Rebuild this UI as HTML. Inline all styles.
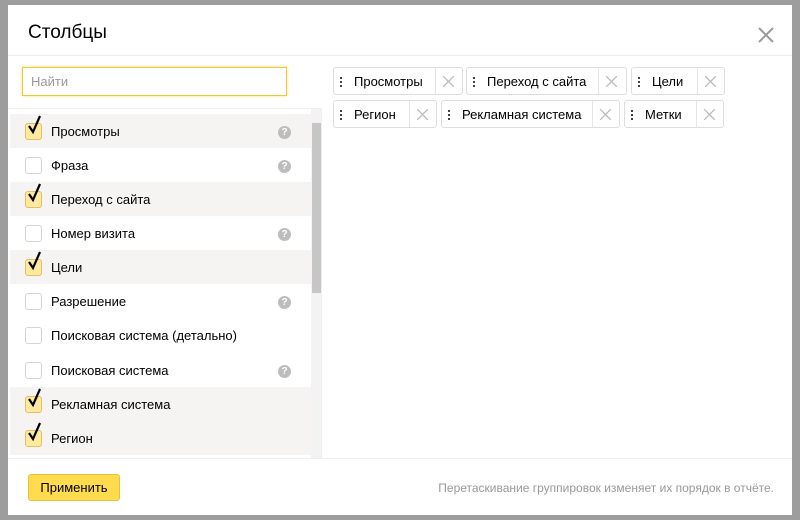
<!DOCTYPE html>
<html><head><meta charset="utf-8"><style>
*{box-sizing:border-box;margin:0;padding:0}
body{width:800px;height:520px;background:#9d9d9d;font-family:"Liberation Sans",Arial,sans-serif;position:relative;overflow:hidden;color:#000}
.m{position:absolute;left:8px;top:5px;width:784px;height:510px;background:#fff}
.t{position:absolute;left:20px;top:17px;font-size:19px}
.x{position:absolute;left:750px;top:22px}
.hl{position:absolute;left:0;top:50px;width:784px;height:1px;background:#eee}
.srch{position:absolute;left:14px;top:62px;width:265px;height:29px;border:1px solid #f0c63a;box-shadow:0 0 3px #ffe07a;padding:6px 8px;font-size:13px;color:#999}
.lp{position:absolute;left:0;top:103px;width:314px;height:350px;border-top:1px solid #eee;border-right:1px solid #eee;overflow:hidden}
.row{position:absolute;left:2px;width:301px;height:34px}
.row.c{background:#f5f4f2}
.cb{position:absolute;left:15px;top:9px;width:17px;height:17px;border:1px solid #d4d4d4;border-radius:3px;background:#fff}
.c .cb{background:#fde9a0;border-color:#e0c060}
.ck{position:absolute;left:15px;top:-3px}
.lb{position:absolute;left:41px;top:10px;font-size:13px}
.q{position:absolute;left:268px;top:12px;width:13px;height:13px;border-radius:50%;background:#bdbdbd;color:#fff;font-size:10px;font-weight:bold;text-align:center;line-height:13px}
.sb{position:absolute;left:303px;top:0;width:11px;height:350px;background:#f3f3f3}
.th{position:absolute;left:304px;top:14px;width:9px;height:170px;background:#c6c6c6}
.tag{position:absolute;height:28px;border:1px solid #ddd;border-radius:3px;font-size:13px}
.tag .d{position:absolute;left:6px;top:8px;width:2px;height:11px;background:radial-gradient(circle,#333 1px,transparent 1.2px) 0 0/2px 4px}
.tag .n{position:absolute;left:20px;top:6px}
.tag .sep{position:absolute;top:0;bottom:0;width:1px;background:#e5e5e5}
.tag svg{position:absolute;top:8px}
.fl{position:absolute;left:0;top:453px;width:784px;height:1px;background:#eee}
.btn{position:absolute;left:20px;top:469px;width:92px;height:27px;background:#ffdb4d;border:1px solid #e5c23a;border-radius:3px;font-size:13px;text-align:center;line-height:25px}
.note{position:absolute;right:18px;top:476px;font-size:12px;color:#999}
</style></head><body>
<div class="m">
<div class="t">Столбцы</div>
<svg class="x" width="16" height="16"><path d="M1 1L15 15M15 1L1 15" stroke="#999" stroke-width="2"/></svg>
<div class="hl"></div>
<div class="srch">Найти</div>
<div class="lp">
<div class="row c" style="top:5px"><div class="cb"></div><svg class="ck" width="20" height="24"><path d="M4 15L8 21L15 5" stroke="#000" stroke-width="2.2" fill="none"/></svg><div class="lb">Просмотры</div><div class="q">?</div></div>
<div class="row" style="top:39px"><div class="cb"></div><div class="lb">Фраза</div><div class="q">?</div></div>
<div class="row c" style="top:73px"><div class="cb"></div><svg class="ck" width="20" height="24"><path d="M4 15L8 21L15 5" stroke="#000" stroke-width="2.2" fill="none"/></svg><div class="lb">Переход с сайта</div></div>
<div class="row" style="top:107px"><div class="cb"></div><div class="lb">Номер визита</div><div class="q">?</div></div>
<div class="row c" style="top:141px"><div class="cb"></div><svg class="ck" width="20" height="24"><path d="M4 15L8 21L15 5" stroke="#000" stroke-width="2.2" fill="none"/></svg><div class="lb">Цели</div></div>
<div class="row" style="top:175px"><div class="cb"></div><div class="lb">Разрешение</div><div class="q">?</div></div>
<div class="row" style="top:209px"><div class="cb"></div><div class="lb">Поисковая система (детально)</div></div>
<div class="row" style="top:244px"><div class="cb"></div><div class="lb">Поисковая система</div><div class="q">?</div></div>
<div class="row c" style="top:278px"><div class="cb"></div><svg class="ck" width="20" height="24"><path d="M4 15L8 21L15 5" stroke="#000" stroke-width="2.2" fill="none"/></svg><div class="lb">Рекламная система</div></div>
<div class="row c" style="top:312px"><div class="cb"></div><svg class="ck" width="20" height="24"><path d="M4 15L8 21L15 5" stroke="#000" stroke-width="2.2" fill="none"/></svg><div class="lb">Регион</div></div>
<div class="sb"></div><div class="th"></div>
</div>
<div class="tag" style="left:325px;top:62px;width:130px"><div class="d"></div><div class="n">Просмотры</div><div class="sep" style="left:101px"></div><svg style="left:109px" width="11" height="11"><path d="M0 0L11 11M11 0L0 11" stroke="#bbb" stroke-width="1.3"/></svg></div>
<div class="tag" style="left:458px;top:62px;width:161px"><div class="d"></div><div class="n">Переход с сайта</div><div class="sep" style="left:131px"></div><svg style="left:139px" width="11" height="11"><path d="M0 0L11 11M11 0L0 11" stroke="#bbb" stroke-width="1.3"/></svg></div>
<div class="tag" style="left:623px;top:62px;width:94px"><div class="d"></div><div class="n">Цели</div><div class="sep" style="left:65px"></div><svg style="left:73px" width="11" height="11"><path d="M0 0L11 11M11 0L0 11" stroke="#bbb" stroke-width="1.3"/></svg></div>
<div class="tag" style="left:325px;top:95px;width:104px"><div class="d"></div><div class="n">Регион</div><div class="sep" style="left:75px"></div><svg style="left:83px" width="11" height="11"><path d="M0 0L11 11M11 0L0 11" stroke="#bbb" stroke-width="1.3"/></svg></div>
<div class="tag" style="left:433px;top:95px;width:179px"><div class="d"></div><div class="n">Рекламная система</div><div class="sep" style="left:150px"></div><svg style="left:158px" width="11" height="11"><path d="M0 0L11 11M11 0L0 11" stroke="#bbb" stroke-width="1.3"/></svg></div>
<div class="tag" style="left:616px;top:95px;width:100px"><div class="d"></div><div class="n">Метки</div><div class="sep" style="left:71px"></div><svg style="left:79px" width="11" height="11"><path d="M0 0L11 11M11 0L0 11" stroke="#bbb" stroke-width="1.3"/></svg></div>
<div class="fl"></div>
<div class="btn">Применить</div>
<div class="note">Перетаскивание группировок изменяет их порядок в отчёте.</div>
</div>
</body></html>
